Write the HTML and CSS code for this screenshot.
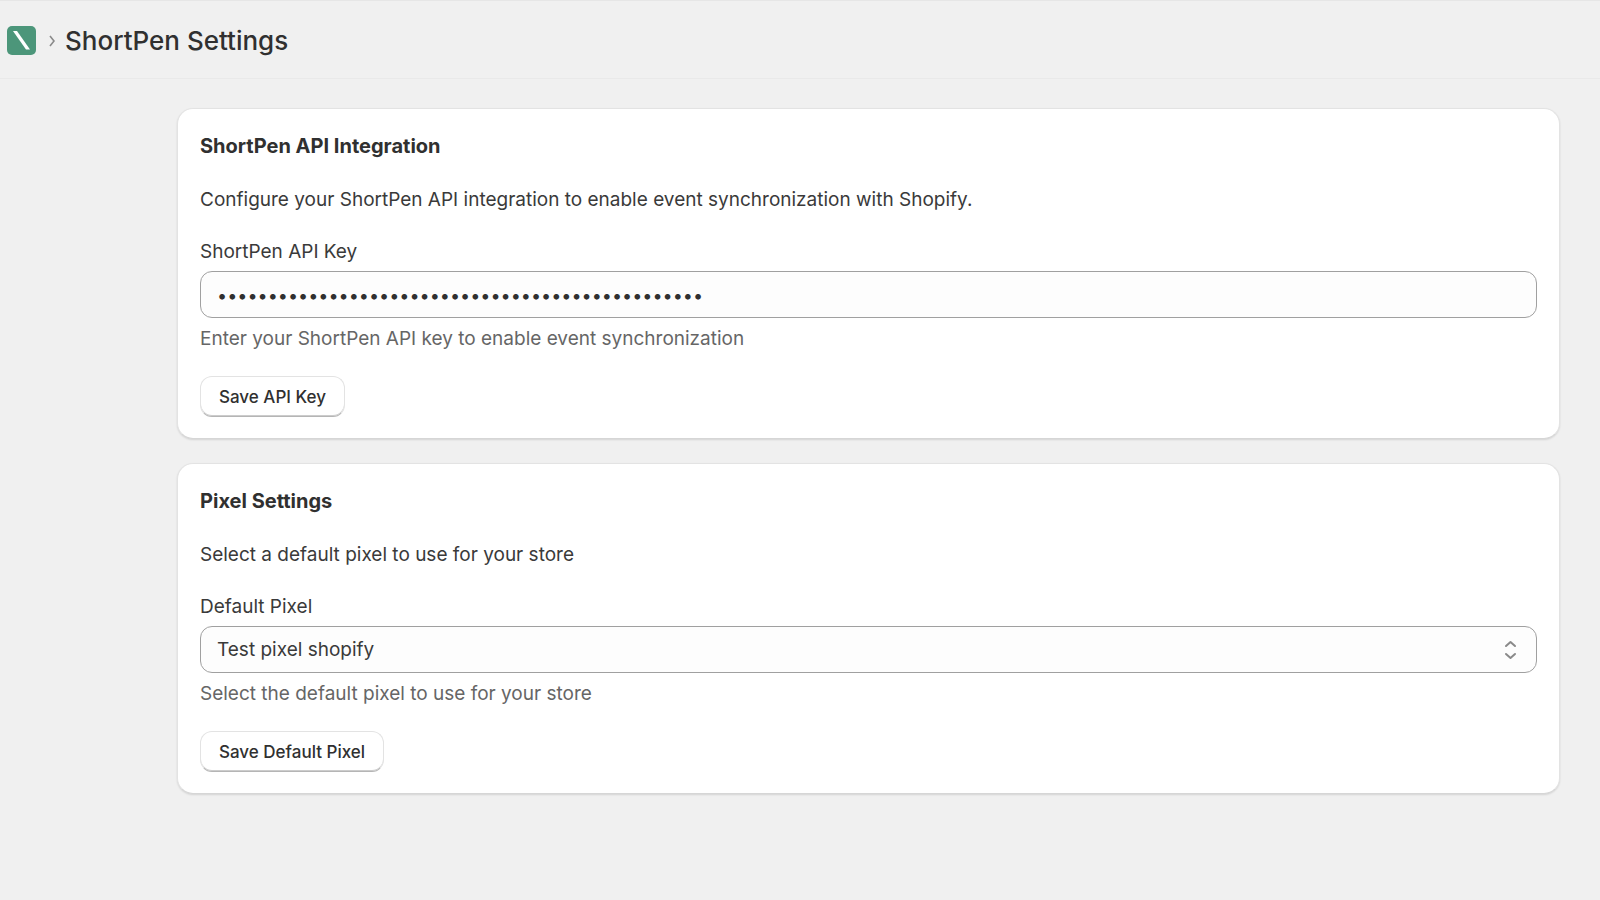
FILE: index.html
```
<!DOCTYPE html>
<html lang="en">
<head>
    <meta charset="UTF-8">
    <meta name="viewport" content="width=device-width, initial-scale=1.0">
    <title>ShortPen Settings</title>
    <link rel="stylesheet" href="styles.css">
</head>
<body>
    <header class="header">
        <a href="#" class="logo" aria-label="ShortPen">
            <svg width="29" height="29" viewBox="0 0 29 29">
                <rect width="29" height="29" rx="5" fill="#4c967a"/>
                <path d="M6 5H10L23 23.500H19Z" fill="#ffffff"/>
            </svg>
        </a>
        <svg class="arrow" width="6" height="12" viewBox="0 0 6 12">
            <path d="M1 1L5 6L1 11" fill="none" stroke="#8a8a8a" stroke-width="1.600"/>
        </svg>
        <h1 class="page-title">ShortPen Settings</h1>
    </header>

    <main class="main">
        <form class="card">
            <h2 class="card-title">ShortPen API Integration</h2>
            <p class="card-text">Configure your ShortPen API integration to enable event synchronization with Shopify.</p>
            <div class="field">
                <label for="apiKey">ShortPen API Key</label>
                <input type="password" id="apiKey" class="control key-input" value="abcdefghijklmnopqrstuvwxabcdefghijklmnopqrstuvwx" aria-describedby="apiKeyHelp">
                <p class="help" id="apiKeyHelp">Enter your ShortPen API key to enable event synchronization</p>
            </div>
            <button type="button" class="btn">Save API Key</button>
        </form>

        <form class="card">
            <h2 class="card-title">Pixel Settings</h2>
            <p class="card-text">Select a default pixel to use for your store</p>
            <div class="field">
                <label for="pixel">Default Pixel</label>
                <div class="select-wrap">
                    <select id="pixel" class="control" aria-describedby="pixelHelp">
                        <option>Test pixel shopify</option>
                    </select>
                    <svg class="select-icon" width="13" height="20" viewBox="0 0 13 20">
                        <path d="M2 6L6.500 2L11 6M2 14L6.500 18L11 14" fill="none" stroke="#8a8a8a" stroke-width="2" stroke-linecap="round" stroke-linejoin="round"/>
                    </svg>
                </div>
                <p class="help" id="pixelHelp">Select the default pixel to use for your store</p>
            </div>
            <button type="button" class="btn">Save Default Pixel</button>
        </form>
    </main>
</body>
</html>
```
FILE: styles.css
```
*{
    box-sizing: border-box;
    margin: 0;
    padding: 0;
}
body{
    background: #f0f0f0;
    color: #3a3a3a;
    font-family: Inter, "Liberation Sans", sans-serif;
    font-size: 19px;
    line-height: 29px;
}

/* header */
.header{
    display: flex;
    align-items: center;
    height: 79px;
    padding: 3px 7px 0;
    border-bottom: 1px solid #e9e9e9;
    box-shadow: inset 0 1px 0 #e6e6e6;
}
.logo{
    display: flex;
}
.arrow{
    margin: 0 10px 0 13px;
}
.page-title{
    color: #303030;
    font-size: 26px;
    font-weight: 550;
    line-height: 32px;
}

/* cards */
.main{
    display: flex;
    flex-direction: column;
    gap: 24px;
    padding: 29px 40px 29px 177px;
}
.card{
    display: flex;
    flex-direction: column;
    align-items: flex-start;
    gap: 23px;
    padding: 23px 22px 21px;
    background: #ffffff;
    border: 1px solid #e3e3e3;
    border-bottom-color: #d6d6d6;
    border-radius: 16px;
    box-shadow: 0 1px 2px rgba(0, 0, 0, 0.12);
}
.card-title{
    margin-bottom: 2px;
    color: #303030;
    font-size: 20px;
    font-weight: 650;
    line-height: 28px;
}

/* form fields */
.field{
    display: flex;
    flex-direction: column;
    width: 100%;
}
.control{
    display: block;
    width: 100%;
    height: 47px;
    padding: 0 16px;
    background: #fdfdfd;
    border: 1px solid #a0a0a0;
    border-radius: 12px;
    color: #3a3a3a;
    font: inherit;
    appearance: none;
}
.field label{
    margin-bottom: 5px;
}
.key-input{
    padding-top: 2px;
    color: #303030;
    font-size: 18px;
}
.help{
    margin-top: 6px;
    color: #666666;
}
.select-wrap{
    position: relative;
}
.select-icon{
    position: absolute;
    top: 14px;
    right: 20px;
    pointer-events: none;
}

.btn{
    height: 41px;
    padding: 0 18px;
    background: #ffffff;
    border: 1px solid #e3e3e3;
    border-bottom-color: #b5b5b5;
    border-radius: 12px;
    box-shadow: inset 0 -1px 0 #cccccc;
    color: #303030;
    font-family: inherit;
    font-size: 17px;
    font-weight: 500;
}
```
